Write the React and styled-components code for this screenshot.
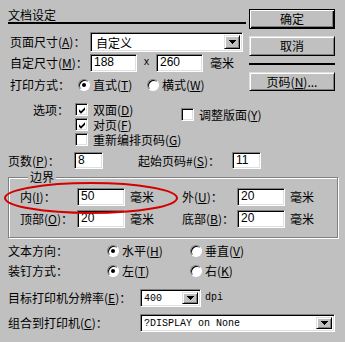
import styled, { createGlobalStyle } from "styled-components";

const GlobalStyle = createGlobalStyle`
  html, body {
    margin: 0;
    padding: 0;
    background: #c0c0c0;
  }
  body {
    font-family: "Noto Sans CJK SC", "Noto Sans", sans-serif;
    font-size: 12px;
    color: #000;
  }
`;

const Dialog = styled.div`
  position: relative;
  width: 345px;
  height: 342px;
  box-sizing: border-box;
  padding: 8px 0 0 8px;
  display: flex;
  flex-direction: column;
  background: #c0c0c0;
`;

const Top = styled.div`
  display: flex;
  align-items: flex-start;
  gap: 3px;
`;

const Main = styled.div`
  width: 238px;
  display: flex;
  flex-direction: column;
`;

const Title = styled.div`
  height: 14px;
  line-height: 14px;
`;

const Rule = styled.div`
  height: 2px;
  background: #000;
  margin: ${(p) => p.$margin || "0"};
`;

const Row = styled.div`
  display: flex;
  align-items: center;
  height: ${(p) => p.$h || 14}px;
  margin-top: ${(p) => p.$mt || 0}px;
  line-height: 14px;
  white-space: nowrap;
`;

const Label = styled.span`
  display: inline-block;
  box-sizing: border-box;
  width: ${(p) => p.$w}px;
  padding-left: ${(p) => p.$pl || 0}px;
  margin-left: ${(p) => p.$ml || 0}px;
  flex: none;
`;

const Key = styled.u`
  text-decoration: underline;
`;

const sunken = `
  box-sizing: border-box;
  border-style: solid;
  border-width: 1px;
  border-color: #808080 #fff #fff #808080;
  box-shadow: inset 1px 1px #000, inset -1px -1px #dfdfdf;
`;

const raised = `
  box-sizing: border-box;
  border-style: solid;
  border-width: 1px;
  border-color: #dfdfdf #000 #000 #dfdfdf;
  box-shadow: inset 1px 1px #fff, inset -1px -1px #808080;
  background: #c0c0c0;
`;

const Field = styled.div`
  ${sunken}
  width: ${(p) => p.$w}px;
  height: ${(p) => p.$h || 18}px;
  background: #fff;
  padding: 0 2px 0 3px;
  font-family: "Liberation Sans", Arial, sans-serif;
  font-size: 12px;
  line-height: ${(p) => (p.$h || 18) - 3}px;
  flex: none;
`;

const Combo = styled.div`
  ${sunken}
  width: ${(p) => p.$w}px;
  height: ${(p) => p.$h || 18}px;
  background: #fff;
  display: flex;
  align-items: stretch;
  padding: 2px;
  flex: none;
`;

const ComboText = styled.span`
  flex: 1;
  padding-left: ${(p) => (p.$mono ? 1 : 3)}px;
  font-family: ${(p) =>
    p.$mono
      ? '"Liberation Mono", "Courier New", monospace'
      : '"Noto Sans CJK SC", sans-serif'};
  font-size: ${(p) => (p.$mono ? 10 : 12)}px;
  line-height: ${(p) => p.$lh}px;
  white-space: nowrap;
`;

const DropButton = styled.span`
  ${raised}
  width: 16px;
  flex: none;
  display: flex;
  align-items: center;
  justify-content: center;
`;

const Mono = styled.span`
  font-family: "Liberation Mono", "Courier New", monospace;
  font-size: 10px;
  margin-left: ${(p) => p.$ml || 0}px;
  width: ${(p) => (p.$w ? `${p.$w}px` : "auto")};
  text-align: ${(p) => p.$align || "left"};
  display: inline-block;
`;

const Unit = styled.span`
  margin-left: ${(p) => p.$ml || 0}px;
`;

const RadioItem = styled.span`
  display: inline-flex;
  align-items: center;
  gap: 3px;
  width: ${(p) => (p.$w ? `${p.$w}px` : "auto")};
  flex: none;
`;

const RadioDot = styled.span`
  box-sizing: border-box;
  width: 12px;
  height: 12px;
  border-radius: 50%;
  background: #fff;
  border: 1px solid;
  border-color: #808080 #fff #fff #808080;
  box-shadow: inset 1px 1px #000;
  display: flex;
  align-items: center;
  justify-content: center;
  &::after {
    content: "";
    width: 4px;
    height: 4px;
    border-radius: 50%;
    background: ${(p) => (p.$on ? "#000" : "transparent")};
  }
`;

const Options = styled.div`
  display: flex;
  align-items: flex-start;
  margin-top: 11px;
  padding-left: 25px;
  line-height: 13px;
`;

const CheckList = styled.div`
  width: ${(p) => p.$w || 106}px;
  display: flex;
  flex-direction: column;
  gap: 2px;
  margin-top: ${(p) => p.$mt || 0}px;
`;

const CheckItem = styled.span`
  display: flex;
  align-items: center;
  gap: 5px;
  height: 13px;
  white-space: nowrap;
`;

const CheckText = styled.span`
  display: block;
  height: 13px;
  line-height: 13px;
`;

const CheckBox = styled.span`
  ${sunken}
  width: 13px;
  height: 13px;
  background: #fff;
  flex: none;
  position: relative;
  svg {
    position: absolute;
    left: 0;
    top: 0;
  }
`;

const Group = styled.fieldset`
  width: 330px;
  box-sizing: border-box;
  margin: 1px 0 0 0;
  padding: 4px 0 9px 11px;
  border: 1px solid #808080;
  box-shadow: inset 1px 1px #fff, 1px 1px #fff;
`;

const Legend = styled.legend`
  margin-left: 8px;
  padding: 0 2px;
  line-height: 14px;
  background: #c0c0c0;
`;

const GroupGrid = styled.div`
  display: grid;
  grid-template-columns: 57px 48px 57px 55px 48px auto;
  row-gap: 4px;
  align-items: center;
  line-height: 14px;
  white-space: nowrap;
`;

const Buttons = styled.div`
  width: 86px;
  margin-top: 1px;
  display: flex;
  flex-direction: column;
`;

const Button = styled.div`
  ${raised}
  height: ${(p) => p.$h || 20}px;
  margin-top: ${(p) => p.$mt || 0}px;
  display: flex;
  align-items: center;
  justify-content: center;
  line-height: 14px;
  ${(p) =>
    p.$default &&
    `
    border-color: #000;
    box-shadow: inset 1px 1px #fff, inset -1px -1px #000, inset -2px -2px #808080;
  `}
`;

const Annotation = styled.svg`
  position: absolute;
  left: 0;
  top: 0;
  pointer-events: none;
`;

function Arrow() {
  return (
    <svg width="7" height="4" viewBox="0 0 7 4" shapeRendering="crispEdges">
      <path d="M0 0h7l-3.5 4z" fill="#000" />
    </svg>
  );
}

function Check({ on, children }) {
  return (
    <CheckItem>
      <CheckBox>
        {on && (
          <svg width="13" height="13" viewBox="0 0 13 13">
            <path d="M3 5.2l2 2 4-4v2.6l-4 4-2-2z" fill="#000" />
          </svg>
        )}
      </CheckBox>
      <CheckText>{children}</CheckText>
    </CheckItem>
  );
}

function Radio({ on, w, children }) {
  return (
    <RadioItem $w={w}>
      <RadioDot $on={on} />
      <span>{children}</span>
    </RadioItem>
  );
}

export default function App() {
  return (
    <>
      <GlobalStyle />
      <Dialog>
        <Top>
          <Main>
            <Title>文档设定</Title>
            <Rule />
            <Row $h={20} $mt={8}>
              <Label $w={82} $pl={2}>
                页面尺寸(<Key>A</Key>)：
              </Label>
              <Combo $w={153} $h={20}>
                <ComboText $lh={16}>自定义</ComboText>
                <DropButton>
                  <Arrow />
                </DropButton>
              </Combo>
            </Row>
            <Row $h={18} $mt={2}>
              <Label $w={82} $pl={2}>
                自定尺寸(<Key>M</Key>)：
              </Label>
              <Field $w={47}>188</Field>
              <Mono $w={19} $align="center">
                x
              </Mono>
              <Field $w={47}>260</Field>
              <Unit $ml={7}>毫米</Unit>
            </Row>
            <Row $h={14} $mt={6}>
              <Label $w={70} $pl={2}>
                打印方式：
              </Label>
              <Radio on w={69}>
                直式(<Key>T</Key>)
              </Radio>
              <Radio>
                横式(<Key>W</Key>)
              </Radio>
            </Row>
          </Main>
          <Buttons>
            <Button $default>确定</Button>
            <Button $mt={7}>取消</Button>
            <Rule $margin="7px 0 0 0" />
            <Button $mt={7} $h={19}>
              页码(<Key>N</Key>)...
            </Button>
          </Buttons>
        </Top>

        <Options>
          <Label $w={42}>选项：</Label>
          <CheckList>
            <Check on>
              双面(<Key>D</Key>)
            </Check>
            <Check on>
              对页(<Key>F</Key>)
            </Check>
            <Check>
              重新编排页码(<Key>G</Key>)
            </Check>
          </CheckList>
          <CheckList $mt={5} $w={150}>
            <Check>
              调整版面(<Key>Y</Key>)
            </Check>
          </CheckList>
        </Options>

        <Row $h={17} $mt={6}>
          <Label $w={66}>
            页数(<Key>P</Key>)：
          </Label>
          <Field $w={29} $h={17}>
            8
          </Field>
          <Label $w={94} $ml={35}>
            起始页码#(<Key>S</Key>)：
          </Label>
          <Field $w={29} $h={17}>
            11
          </Field>
        </Row>

        <Group>
          <Legend>边界</Legend>
          <GroupGrid>
            <span>
              内(<Key>I</Key>)：
            </span>
            <Field $w={48}>50</Field>
            <Unit $ml={5}>毫米</Unit>
            <span>
              外(<Key>U</Key>)：
            </span>
            <Field $w={48}>20</Field>
            <Unit $ml={5}>毫米</Unit>
            <span>
              顶部(<Key>O</Key>)：
            </span>
            <Field $w={48}>20</Field>
            <Unit $ml={5}>毫米</Unit>
            <span>
              底部(<Key>B</Key>)：
            </span>
            <Field $w={48}>20</Field>
            <Unit $ml={5}>毫米</Unit>
          </GroupGrid>
        </Group>

        <Row $h={14} $mt={6}>
          <Label $w={99}>文本方向：</Label>
          <Radio on w={83}>
            水平(<Key>H</Key>)
          </Radio>
          <Radio>
            垂直(<Key>V</Key>)
          </Radio>
        </Row>
        <Row $h={14} $mt={6}>
          <Label $w={99}>装钉方式：</Label>
          <Radio on w={83}>
            左(<Key>T</Key>)
          </Radio>
          <Radio>
            右(<Key>K</Key>)
          </Radio>
        </Row>

        <Row $h={18} $mt={11}>
          <Label $w={132}>
            目标打印机分辨率(<Key>E</Key>)：
          </Label>
          <Combo $w={61}>
            <ComboText $mono $lh={14}>
              400
            </ComboText>
            <DropButton>
              <Arrow />
            </DropButton>
          </Combo>
          <Mono $ml={4}>dpi</Mono>
        </Row>
        <Row $h={18} $mt={7}>
          <Label $w={132}>
            组合到打印机(<Key>C</Key>)：
          </Label>
          <Combo $w={195}>
            <ComboText $mono $lh={14}>
              ?DISPLAY on None
            </ComboText>
            <DropButton>
              <Arrow />
            </DropButton>
          </Combo>
        </Row>

        <Annotation width="345" height="342" viewBox="0 0 345 342">
          <ellipse
            cx="91"
            cy="198"
            rx="86"
            ry="15"
            fill="none"
            stroke="#d40000"
            strokeWidth="2"
          />
        </Annotation>
      </Dialog>
    </>
  );
}
